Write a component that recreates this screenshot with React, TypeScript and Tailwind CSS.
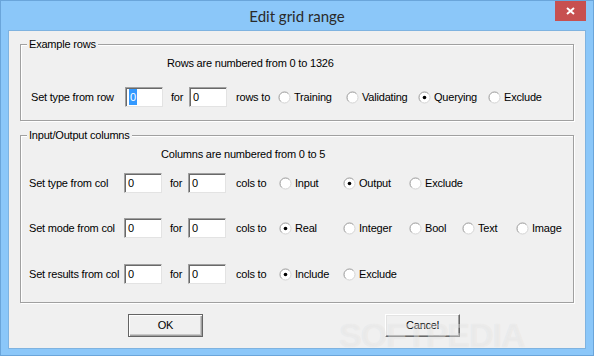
import React from "react";

const font = { fontFamily: '"Liberation Sans", Arial, sans-serif' };

const Radio = ({ checked }: { checked?: boolean }) => (
    <svg width="13" height="13" viewBox="0 0 13 13" className="shrink-0">
        <circle cx="6.5" cy="6.5" r="5.5" fill="#fff" stroke="#d4d4d4" />
        <path d="M2.6 10.4 A5.5 5.5 0 0 1 10.4 2.6" fill="none" stroke="#a8a8a8" />
        <circle cx="6.5" cy="6.5" r="4.5" fill="#fff" />
        {checked && <circle cx="6.5" cy="6.5" r="1.8" fill="#000" />}
    </svg>
);

const Option = ({ label, w, checked }: { label: string; w: string; checked?: boolean }) => (
    <div className={`flex items-center gap-[3px] ${w}`}>
        <Radio checked={checked} />
        <span>{label}</span>
    </div>
);

const Field = ({ selected }: { selected?: boolean }) => (
    <div className="w-[38px] h-[20px] bg-white border border-t-[#a0a0a0] border-l-[#a0a0a0] border-r-[#e3e3e3] border-b-[#e3e3e3] shadow-[inset_1px_1px_0_#696969] pl-[3px] flex items-center">
        {selected ? <span className="bg-[#3399ff] text-white px-[1px]">0</span> : <span>0</span>}
    </div>
);

const Row = ({
    label,
    unit,
    labelW,
    unitW,
    children,
    className = "",
}: {
    label: string;
    unit: string;
    labelW: string;
    unitW: string;
    children: React.ReactNode;
    className?: string;
}) => (
    <div className={`flex items-center h-[20px] ${className}`}>
        <span className={`${labelW} shrink-0`}>{label}</span>
        <Field selected={unit === "rows to"} />
        <span className="w-[26px] pl-[8px] shrink-0">for</span>
        <Field />
        <span className={`${unitW} shrink-0`}>{unit}</span>
        {children}
    </div>
);

const Group = ({ title, h, className = "", children }: { title: string; h: string; className?: string; children: React.ReactNode }) => (
    <div className={`relative border border-[#a0a0a0] shadow-[inset_1px_1px_0_#fff,1px_1px_0_#fff] ${h} ${className}`}>
        <span className="absolute -top-[8px] left-[6px] bg-[#f0f0f0] px-[2px] leading-[14px]">{title}</span>
        {children}
    </div>
);

const Btn = ({ label, primary }: { label: string; primary?: boolean }) => (
    <button
        className={`w-[75px] h-[23px] bg-[#f0f0f0] flex items-center justify-center ${
            primary
                ? "border border-[#646464] shadow-[inset_1px_1px_0_#fff,inset_-1px_-1px_0_#a0a0a0,inset_-2px_-2px_0_#c8c8c8]"
                : "border border-t-white border-l-white border-r-[#696969] border-b-[#696969] shadow-[inset_-1px_-1px_0_#a0a0a0,inset_1px_1px_0_#e3e3e3]"
        }`}
    >
        {label}
    </button>
);

export default function App() {
    return (
        <div className="w-[594px] h-[356px] bg-[#8bc7f9] border border-[#6aa5da] relative overflow-hidden">
            <div className="h-[29px] relative flex items-center justify-center">
                <span className="text-[15px] text-[#2a2a2a] mt-[1px]" style={{ fontFamily: '"Lato", "Noto Sans", sans-serif' }}>
                    Edit grid range
                </span>
                <div className="absolute right-[7px] -top-[1px] w-[31px] h-[21px] bg-[#c75050] flex items-center justify-center">
                    <svg width="9" height="8" viewBox="0 0 9 8">
                        <path d="M1 1 L8 7 M8 1 L1 7" stroke="#fff" strokeWidth="2" />
                    </svg>
                </div>
            </div>
            <div
                className="ml-[7px] w-[578px] h-[319px] bg-[#f0f0f0] border border-[#7fb3e0] px-[11px] text-[11px] text-black tracking-[-0.2px] flex flex-col"
                style={font}
            >
                <Group title="Example rows" h="h-[77px]" className="mt-[13px]">
                    <div className="pt-[12px] pl-[146px] leading-[13px]">Rows are numbered from 0 to 1326</div>
                    <Row label="Set type from row" unit="rows to" labelW="w-[104px] pl-[10px]" unitW="w-[51px] pl-[9px]" className="mt-[17px]">
                        <Option label="Training" w="w-[68px]" />
                        <Option label="Validating" w="w-[72px]" />
                        <Option label="Querying" w="w-[70px]" checked />
                        <Option label="Exclude" w="w-[70px]" />
                    </Row>
                </Group>
                <Group title="Input/Output columns" h="h-[168px]" className="mt-[14px]">
                    <div className="pt-[12px] pl-[140px] leading-[13px]">Columns are numbered from 0 to 5</div>
                    <Row label="Set type from col" unit="cols to" labelW="w-[103px] pl-[8px]" unitW="w-[53px] pl-[10px]" className="mt-[12px]">
                        <Option label="Input" w="w-[64px]" />
                        <Option label="Output" w="w-[66px]" checked />
                        <Option label="Exclude" w="w-[66px]" />
                    </Row>
                    <Row label="Set mode from col" unit="cols to" labelW="w-[103px] pl-[8px]" unitW="w-[53px] pl-[10px]" className="mt-[25px]">
                        <Option label="Real" w="w-[64px]" checked />
                        <Option label="Integer" w="w-[66px]" />
                        <Option label="Bool" w="w-[53px]" />
                        <Option label="Text" w="w-[54px]" />
                        <Option label="Image" w="w-[54px]" />
                    </Row>
                    <Row label="Set results from col" unit="cols to" labelW="w-[103px] pl-[8px]" unitW="w-[53px] pl-[10px]" className="mt-[26px]">
                        <Option label="Include" w="w-[64px]" checked />
                        <Option label="Exclude" w="w-[66px]" />
                    </Row>
                </Group>
                <div className="flex mt-[11px] pl-[108px] gap-[182px]">
                    <Btn label="OK" primary />
                    <Btn label="Cancel" />
                </div>
            </div>
            <div
                className="absolute left-[338px] top-[309px] text-[34px] font-bold tracking-[-1px] text-white/40 pointer-events-none [text-shadow:0_0_1px_rgba(0,0,0,0.08)]"
                style={font}
            >
                SOFTPEDIA
            </div>
        </div>
    );
}
